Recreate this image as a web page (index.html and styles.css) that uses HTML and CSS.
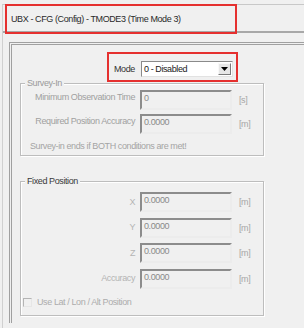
FILE: index.html
```html
<!DOCTYPE html>
<html lang="en">
<head>
  <meta charset="UTF-8" />
  <title>UBX - CFG (Config) - TMODE3</title>
  <link rel="stylesheet" href="styles.css">
</head>
<body>
  <div class="window">
    <div class="title-bar">
      <span class="title">UBX - CFG (Config) - TMODE3 (Time Mode 3)</span>
    </div>

    <div class="panel">
      <div class="mode-row">
        <span class="mode-label">Mode</span>
        <div class="combo">
          <span class="combo-text">0 - Disabled</span>
          <span class="combo-btn">
            <svg width="7" height="4" viewBox="0 0 7 4"><path d="M0 0H7L3.5 4Z" fill="#000"/></svg>
          </span>
        </div>
      </div>

      <div class="group survey">
        <span class="group-title">Survey-In</span>
        <div class="fields">
          <span class="label">Minimum Observation Time</span>
          <div class="edit">0</div>
          <span class="unit">[s]</span>
          <span class="label">Required Position Accuracy</span>
          <div class="edit">0.0000</div>
          <span class="unit">[m]</span>
        </div>
        <p class="note">Survey-in ends if BOTH conditions are met!</p>
      </div>

      <div class="group fixed">
        <span class="group-title">Fixed Position</span>
        <div class="fields">
          <span class="label">X</span>
          <div class="edit">0.0000</div>
          <span class="unit">[m]</span>
          <span class="label">Y</span>
          <div class="edit">0.0000</div>
          <span class="unit">[m]</span>
          <span class="label">Z</span>
          <div class="edit">0.0000</div>
          <span class="unit">[m]</span>
          <span class="label">Accuracy</span>
          <div class="edit">0.0000</div>
          <span class="unit">[m]</span>
        </div>
        <div class="check-row">
          <span class="checkbox"></span>
          <span class="check-text">Use Lat / Lon / Alt Position</span>
        </div>
      </div>
    </div>

    <!-- annotation boxes -->
    <div class="mark mark-title"></div>
    <div class="mark mark-mode"></div>
  </div>
</body>
</html>
```

FILE: styles.css
```css
body {
  margin: 0;
  background-color: #f0f0f0;
  font-family: "Liberation Sans", Arial, sans-serif;
  font-size: 9px;
  letter-spacing: -0.4px;
  color: #333;
  overflow: hidden;
}
.window {
  position: relative;
  margin: 4px 0 0 2px;
  height: 323px;
  border-top: 1px solid #c8c8c8;
  border-left: 1px solid #d0d0d0;
}
.title-bar {
  height: 26px;
  border-bottom: 2px solid #a8a8a8;
  display: flex;
  align-items: center;
  padding-left: 8px;
}
.title {
  color: #2a2a2a;
  line-height: 11px;
  margin-top: 2px;
}
.panel {
  margin: 9px 0 0 6px;
  border-top: 3px double #a0a0a0;
  border-left: 3px double #a0a0a0;
  height: 278px;
}
.mode-row {
  display: flex;
  align-items: center;
  margin-top: 16px;
  padding-left: 102px;
  gap: 6px;
}
.mode-label {
  color: #333;
}
.combo {
  width: 92px;
  height: 16px;
  box-sizing: border-box;
  background: #fff;
  border: 1px solid;
  border-color: #8a8a8a #e2e2e2 #e2e2e2 #8a8a8a;
  display: flex;
  align-items: center;
  justify-content: space-between;
}
.combo-text {
  padding-left: 2px;
  color: #222;
}
.combo-btn {
  width: 13px;
  height: 12px;
  margin-right: 1px;
  background: #e6e6e6;
  border: 1px solid;
  border-color: #f8f8f8 #7a7a7a #7a7a7a #f8f8f8;
  box-sizing: border-box;
  display: flex;
  align-items: center;
  justify-content: center;
}
.group {
  width: 244px;
  box-sizing: border-box;
  margin-left: 8px;
  border: 1px solid #bdbdbd;
  box-shadow: inset 1px 1px 0 #fff, 1px 1px 0 #fff;
}
.survey {
  margin-top: 6px;
  padding-bottom: 3px;
}
.fixed {
  margin-top: 25px;
  padding-bottom: 7px;
}
.group-title {
  display: block;
  width: fit-content;
  margin: -6px 0 0 4px;
  padding: 0 2px;
  line-height: 11px;
  background: #f0f0f0;
  color: #9a9a9a;
}
.fixed .group-title {
  color: #3a3a3a;
}
.fields {
  display: grid;
  grid-template-columns: 116px 92px auto;
  column-gap: 3px;
  grid-auto-rows: 20px;
}
.survey .fields {
  margin-top: 1px;
  row-gap: 4px;
}
.fixed .fields {
  margin-top: 5px;
  row-gap: 5.5px;
}
.label {
  text-align: right;
  padding-right: 2px;
  line-height: 11px;
  color: #a0a0a0;
  align-self: center;
}
.survey .label {
  align-self: start;
  padding-top: 2px;
}
.fixed .label {
  color: #b4b4b4;
}
.edit {
  box-sizing: border-box;
  border: 2px solid;
  border-color: #8c8c8c #ececec #ececec #8c8c8c;
  padding: 0 2px;
  line-height: 13px;
  color: #8a8a8a;
}
.unit {
  margin-left: 4px;
  align-self: center;
  color: #a6a6a6;
}
.note {
  margin: 7px 0 0 9px;
  line-height: 11px;
  color: #a4a4a4;
}
.check-row {
  display: flex;
  align-items: center;
  gap: 5px;
  margin: 8px 0 0 2px;
  height: 11px;
}
.checkbox {
  width: 9px;
  height: 9px;
  box-sizing: border-box;
  border: 1px solid #b4b4b4;
  border-right-color: #e6e6e6;
  border-bottom-color: #e6e6e6;
  background: #f0f0f0;
}
.check-text {
  color: #acacac;
}
.mark {
  position: absolute;
  border: 2px solid #e5302f;
  box-sizing: border-box;
}
.mark-title {
  left: 2px;
  top: -1px;
  width: 232px;
  height: 30px;
}
.mark-mode {
  left: 104px;
  top: 47px;
  width: 131px;
  height: 30px;
}
```
